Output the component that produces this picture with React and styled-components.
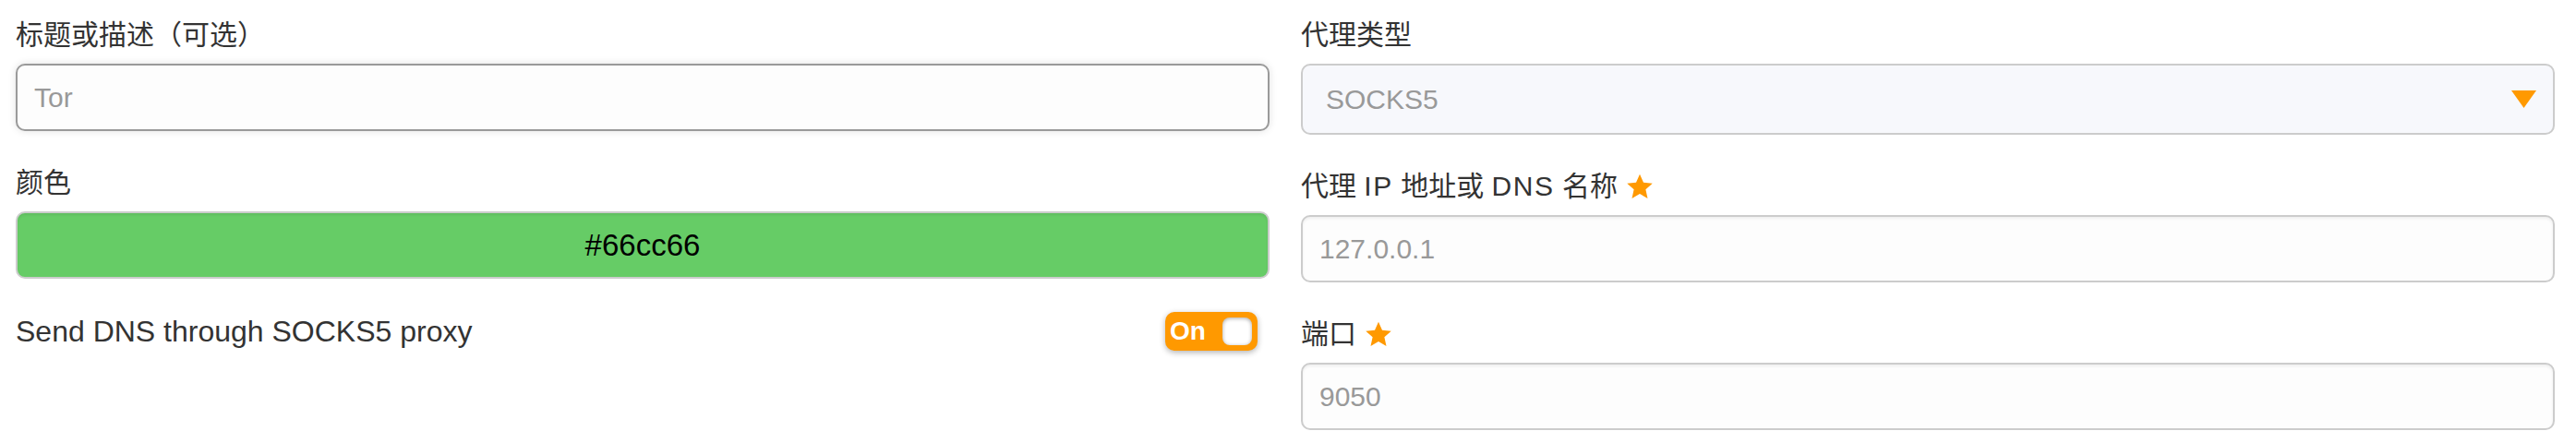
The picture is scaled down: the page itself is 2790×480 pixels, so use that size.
import React from "react";
import styled, { createGlobalStyle } from "styled-components";

const GlobalStyle = createGlobalStyle`
  html, body {
    margin: 0;
    padding: 0;
    background: #ffffff;
  }
  body {
    font-family: "Liberation Sans", "Noto Sans CJK SC", sans-serif;
  }
`;

const Form = styled.form`
  display: grid;
  grid-template-columns: 1fr 1fr;
  column-gap: 34px;
  padding: 18px 23px 0 17px;
  width: 2790px;
  box-sizing: border-box;
`;

const Column = styled.div`
  display: flex;
  flex-direction: column;
`;

const Field = styled.div`
  display: flex;
  flex-direction: column;
  margin-bottom: 36px;
`;

const Label = styled.label`
  display: flex;
  align-items: center;
  gap: 9px;
  font-size: 30px;
  line-height: 40px;
  color: #333;
  margin-bottom: 11px;
`;

// latin words inside labels run a bit wider in the original font
const Latin = styled.span`
  letter-spacing: 1.6px;
`;

const TextInput = styled.input`
  height: 73px;
  box-sizing: border-box;
  padding: 0 18px;
  font-family: inherit;
  font-size: 30px;
  color: #999;
  background: #fdfdfd;
  border: 2px solid ${(p) => (p.$focused ? "#9a9a9a" : "#cccccc")};
  border-radius: 10px;
  box-shadow: ${(p) =>
    p.$focused
      ? "0 0 8px rgba(0, 0, 0, 0.12)"
      : "inset 0 2px 3px rgba(0, 0, 0, 0.06)"};
  outline: none;
`;

const SelectBox = styled.div`
  display: flex;
  align-items: center;
  justify-content: space-between;
  height: 77px;
  box-sizing: border-box;
  padding: 0 18px 0 25px;
  font-size: 30px;
  color: #999;
  background: #f7f8fc;
  border: 2px solid #cccccc;
  border-radius: 10px;
`;

const ColorBar = styled.div`
  display: flex;
  align-items: center;
  justify-content: center;
  height: 73px;
  box-sizing: border-box;
  font-size: 33px;
  color: #000;
  background: ${(p) => p.$color};
  border: 2px solid #cccccc;
  border-radius: 10px;
  box-shadow: inset 0 2px 3px rgba(0, 0, 0, 0.08);
`;

const ToggleRow = styled.div`
  display: flex;
  align-items: center;
  justify-content: space-between;
  padding-right: 13px;
  font-size: 32px;
  color: #333;
`;

const Toggle = styled.div`
  display: flex;
  align-items: center;
  justify-content: space-between;
  width: 100px;
  height: 42px;
  box-sizing: border-box;
  padding: 0 6px 0 5px;
  background: #ff9900;
  border-radius: 10px;
  box-shadow: 0 2px 6px rgba(0, 0, 0, 0.3);
  color: #fff;
  font-weight: bold;
  font-size: 28px;
`;

const Knob = styled.span`
  width: 32px;
  height: 30px;
  background: #fff;
  border-radius: 8px;
  box-shadow: inset 0 1px 4px rgba(0, 0, 0, 0.35);
`;

const Star = () => (
  <svg width="30" height="29" viewBox="0 0 24 23">
    <path
      d="M12 0.5l3.2 7.2 7.8 0.8-5.9 5.2 1.7 7.8L12 17.5l-6.8 4 1.7-7.8L1 8.5l7.8-0.8z"
      fill="#ff9900"
    />
  </svg>
);

const Arrow = () => (
  <svg width="27" height="19" viewBox="0 0 27 19">
    <path d="M0 0h27L13.5 19z" fill="#ff9900" />
  </svg>
);

const App = () => (
  <>
    <GlobalStyle />
    <Form>
      <Column>
        <Field>
          <Label>标题或描述（可选）</Label>
          <TextInput $focused defaultValue="Tor" />
        </Field>
        <Field>
          <Label>颜色</Label>
          <ColorBar $color="#66cc66">#66cc66</ColorBar>
        </Field>
        <ToggleRow>
          <span>Send DNS through SOCKS5 proxy</span>
          <Toggle>
            On
            <Knob />
          </Toggle>
        </ToggleRow>
      </Column>
      <Column>
        <Field>
          <Label>代理类型</Label>
          <SelectBox>
            SOCKS5
            <Arrow />
          </SelectBox>
        </Field>
        <Field>
          <Label>
            <span>
              代理 <Latin>IP</Latin> 地址或 <Latin>DNS</Latin> 名称
            </span>
            <Star />
          </Label>
          <TextInput defaultValue="127.0.0.1" />
        </Field>
        <Field>
          <Label>
            端口
            <Star />
          </Label>
          <TextInput defaultValue="9050" />
        </Field>
      </Column>
    </Form>
  </>
);

export default App;
